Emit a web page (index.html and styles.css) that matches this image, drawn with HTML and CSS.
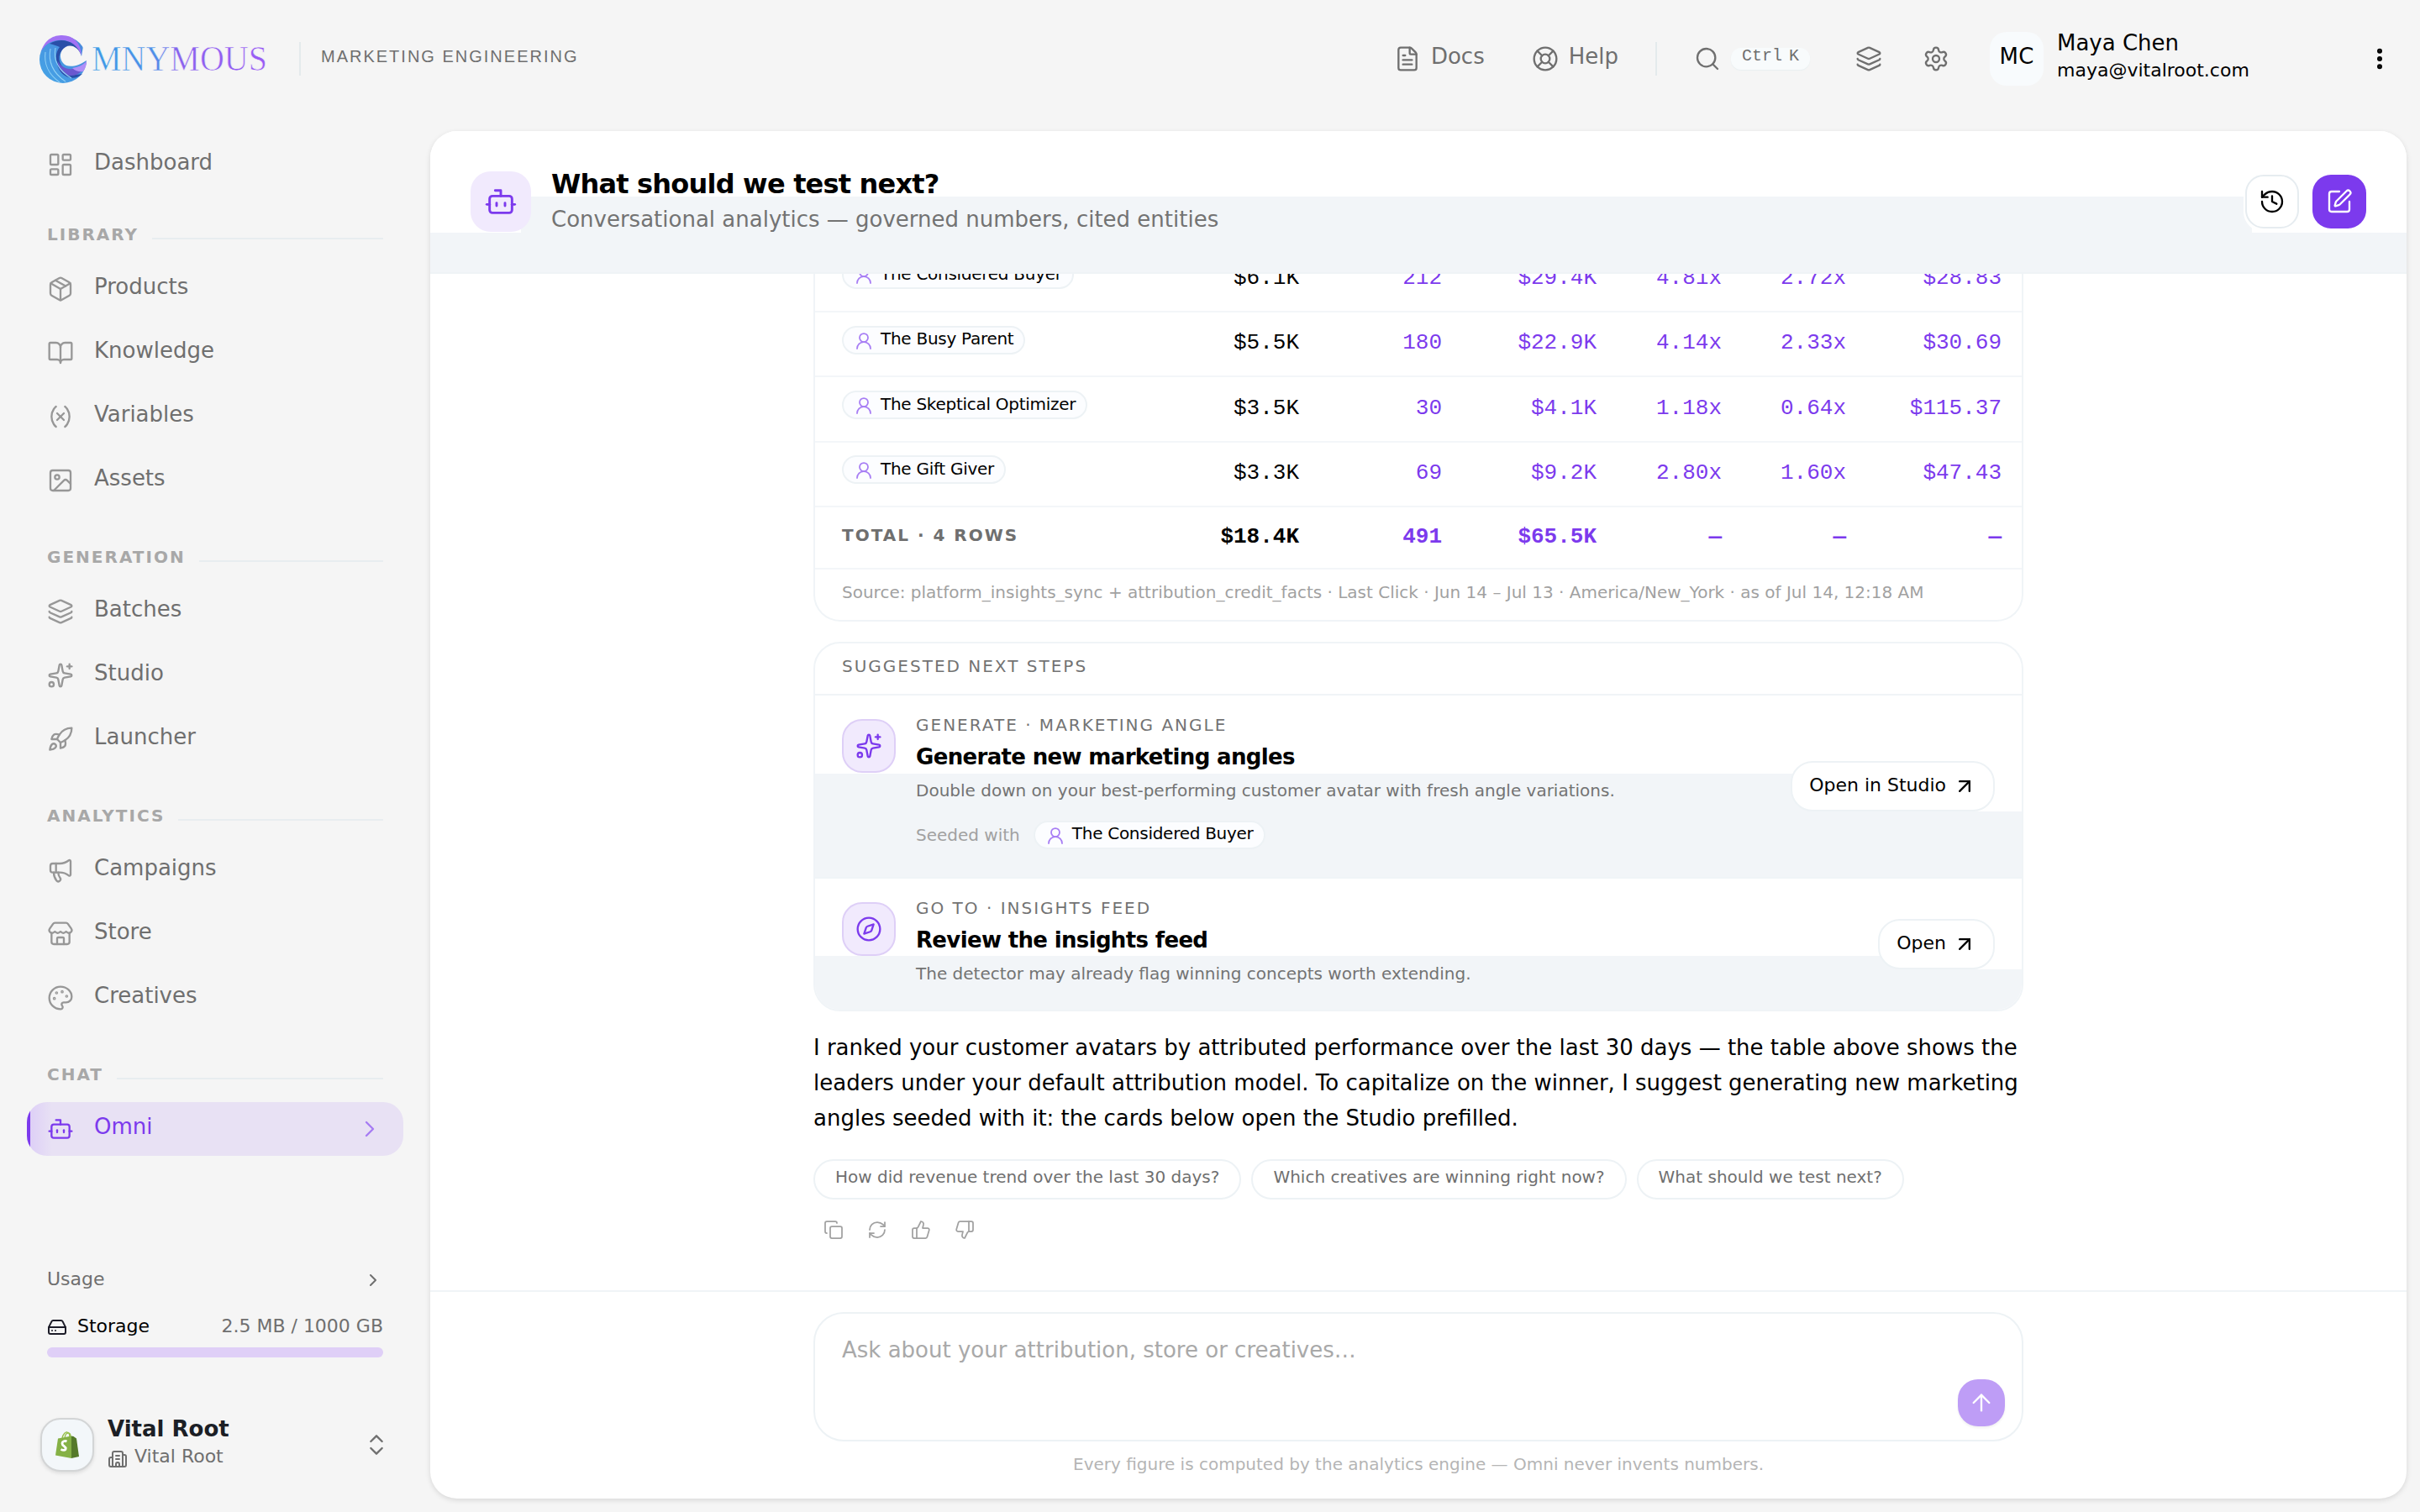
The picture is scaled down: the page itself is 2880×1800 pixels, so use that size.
FILE: index.html
```html
<!DOCTYPE html>
<html lang="en">
<head>
  <meta charset="UTF-8" />
  <meta name="viewport" content="width=device-width, initial-scale=1.0"/>
  <title>Omni - Omnymous</title>
  <link rel="stylesheet" href="styles.css">
</head>
<body>

  <!-- icon sprite -->
  <svg class="sprite" xmlns="http://www.w3.org/2000/svg">
    <symbol id="i-dashboard" viewBox="0 0 24 24"><rect width="7" height="9" x="3" y="3" rx="1"/><rect width="7" height="5" x="14" y="3" rx="1"/><rect width="7" height="9" x="14" y="12" rx="1"/><rect width="7" height="5" x="3" y="16" rx="1"/></symbol>
    <symbol id="i-package" viewBox="0 0 24 24"><path d="M11 21.73a2 2 0 0 0 2 0l7-4A2 2 0 0 0 21 16V8a2 2 0 0 0-1-1.73l-7-4a2 2 0 0 0-2 0l-7 4A2 2 0 0 0 3 8v8a2 2 0 0 0 1 1.73z"/><path d="M12 22V12"/><path d="M3.29 7 12 12l8.71-5"/><path d="m7.5 4.27 9 5.15"/></symbol>
    <symbol id="i-book" viewBox="0 0 24 24"><path d="M12 7v14"/><path d="M3 18a1 1 0 0 1-1-1V4a1 1 0 0 1 1-1h5a4 4 0 0 1 4 4 4 4 0 0 1 4-4h5a1 1 0 0 1 1 1v13a1 1 0 0 1-1 1h-6a3 3 0 0 0-3 3 3 3 0 0 0-3-3z"/></symbol>
    <symbol id="i-variable" viewBox="0 0 24 24"><path d="M8 21s-4-3-4-9 4-9 4-9"/><path d="M16 3s4 3 4 9-4 9-4 9"/><path d="m15 9-6 6"/><path d="m9 9 6 6"/></symbol>
    <symbol id="i-image" viewBox="0 0 24 24"><rect width="18" height="18" x="3" y="3" rx="2"/><circle cx="9" cy="9" r="2"/><path d="m21 15-3.086-3.086a2 2 0 0 0-2.828 0L6 21"/></symbol>
    <symbol id="i-layers" viewBox="0 0 24 24"><path d="M12.83 2.18a2 2 0 0 0-1.66 0L2.6 6.08a1 1 0 0 0 0 1.83l8.58 3.91a2 2 0 0 0 1.66 0l8.58-3.9a1 1 0 0 0 0-1.83z"/><path d="M2 12a1 1 0 0 0 .58.91l8.6 3.91a2 2 0 0 0 1.65 0l8.58-3.9A1 1 0 0 0 22 12"/><path d="M2 17a1 1 0 0 0 .58.91l8.6 3.91a2 2 0 0 0 1.65 0l8.58-3.9A1 1 0 0 0 22 17"/></symbol>
    <symbol id="i-sparkles" viewBox="0 0 24 24"><path d="M11.017 2.814a1 1 0 0 1 1.966 0l1.051 5.558a2 2 0 0 0 1.594 1.594l5.558 1.051a1 1 0 0 1 0 1.966l-5.558 1.051a2 2 0 0 0-1.594 1.594l-1.051 5.558a1 1 0 0 1-1.966 0l-1.051-5.558a2 2 0 0 0-1.594-1.594l-5.558-1.051a1 1 0 0 1 0-1.966l5.558-1.051a2 2 0 0 0 1.594-1.594z"/><path d="M20 2v4"/><path d="M22 4h-4"/><circle cx="4" cy="20" r="2"/></symbol>
    <symbol id="i-rocket" viewBox="0 0 24 24"><path d="M4.500 16.500c-1.500 1.260-2 5-2 5s3.740-.5 5-2c.71-.84.7-2.130-.09-2.910a2.180 2.180 0 0 0-2.910-.09z"/><path d="m12 15-3-3a22 22 0 0 1 2-3.950A12.880 12.880 0 0 1 22 2c0 2.720-.78 7.500-6 11a22.350 22.350 0 0 1-4 2z"/><path d="M9 12H4s.55-3.030 2-4c1.620-1.080 5 0 5 0"/><path d="M12 15v5s3.030-.55 4-2c1.080-1.620 0-5 0-5"/></symbol>
    <symbol id="i-megaphone" viewBox="0 0 24 24"><path d="M11 6a13 13 0 0 0 8.400-2.800A1 1 0 0 1 21 4v12a1 1 0 0 1-1.600.8A13 13 0 0 0 11 14H5a2 2 0 0 1-2-2V8a2 2 0 0 1 2-2z"/><path d="M6 14a12 12 0 0 0 2.400 7.200 2 2 0 0 0 3.200-2.400A8 8 0 0 1 10 14"/><path d="M8 6v8"/></symbol>
    <symbol id="i-store" viewBox="0 0 24 24"><path d="M15 21v-5a1 1 0 0 0-1-1h-4a1 1 0 0 0-1 1v5"/><path d="M17.774 10.310a1.120 1.120 0 0 0-1.549 0 2.500 2.500 0 0 1-3.451 0 1.120 1.120 0 0 0-1.548 0 2.500 2.500 0 0 1-3.452 0 1.120 1.120 0 0 0-1.549 0 2.500 2.500 0 0 1-3.770-3.248l2.889-4.184A2 2 0 0 1 7 2h10a2 2 0 0 1 1.653.873l2.895 4.192a2.500 2.500 0 0 1-3.774 3.244"/><path d="M4 10.950V19a2 2 0 0 0 2 2h12a2 2 0 0 0 2-2v-8.050"/></symbol>
    <symbol id="i-palette" viewBox="0 0 24 24"><path d="M12 22a1 1 0 0 1 0-20 10 9 0 0 1 10 9 5 5 0 0 1-5 5h-2.250a1.750 1.750 0 0 0-1.400 2.800l.3.400a1.750 1.750 0 0 1-1.400 2.800z"/><circle cx="13.500" cy="6.500" r=".5"/><circle cx="17.500" cy="10.500" r=".5"/><circle cx="6.500" cy="12.500" r=".5"/><circle cx="8.500" cy="7.500" r=".5"/></symbol>
    <symbol id="i-bot" viewBox="0 0 24 24"><path d="M12 8V4H8"/><rect width="16" height="12" x="4" y="8" rx="2"/><path d="M2 14h2"/><path d="M20 14h2"/><path d="M15 13v2"/><path d="M9 13v2"/></symbol>
    <symbol id="i-chevron" viewBox="0 0 24 24"><path d="m9 18 6-6-6-6"/></symbol>
    <symbol id="i-updown" viewBox="0 0 24 24"><path d="m7 15 5 5 5-5"/><path d="m7 9 5-5 5 5"/></symbol>
    <symbol id="i-drive" viewBox="0 0 24 24"><path d="M10 16h.01"/><path d="M2.212 11.577a2 2 0 0 0-.212.896V18a2 2 0 0 0 2 2h16a2 2 0 0 0 2-2v-5.527a2 2 0 0 0-.212-.896L18.550 5.110A2 2 0 0 0 16.760 4H7.240a2 2 0 0 0-1.790 1.110z"/><path d="M21.946 12.013H2.054"/><path d="M6 16h.01"/></symbol>
    <symbol id="i-building" viewBox="0 0 24 24"><path d="M10 12h4"/><path d="M10 8h4"/><path d="M14 21v-3a2 2 0 0 0-4 0v3"/><path d="M6 10H4a2 2 0 0 0-2 2v7a2 2 0 0 0 2 2h16a2 2 0 0 0 2-2V9a2 2 0 0 0-2-2h-2"/><path d="M6 21V5a2 2 0 0 1 2-2h8a2 2 0 0 1 2 2v16"/></symbol>
    <symbol id="i-file" viewBox="0 0 24 24"><path d="M6 22a2 2 0 0 1-2-2V4a2 2 0 0 1 2-2h8a2.400 2.400 0 0 1 1.704.706l3.588 3.588A2.400 2.400 0 0 1 20 8v12a2 2 0 0 1-2 2z"/><path d="M14 2v5a1 1 0 0 0 1 1h5"/><path d="M10 9H8"/><path d="M16 13H8"/><path d="M16 17H8"/></symbol>
    <symbol id="i-buoy" viewBox="0 0 24 24"><circle cx="12" cy="12" r="10"/><path d="m4.930 4.930 4.240 4.240"/><path d="m14.830 9.170 4.240-4.240"/><path d="m14.830 14.830 4.240 4.240"/><path d="m9.170 14.830-4.240 4.240"/><circle cx="12" cy="12" r="4"/></symbol>
    <symbol id="i-search" viewBox="0 0 24 24"><path d="m21 21-4.340-4.340"/><circle cx="11" cy="11" r="8"/></symbol>
    <symbol id="i-settings" viewBox="0 0 24 24"><path d="M9.671 4.136a2.340 2.340 0 0 1 4.659 0 2.340 2.340 0 0 0 3.319 1.915 2.340 2.340 0 0 1 2.330 4.033 2.340 2.340 0 0 0 0 3.831 2.340 2.340 0 0 1-2.330 4.033 2.340 2.340 0 0 0-3.319 1.915 2.340 2.340 0 0 1-4.659 0 2.340 2.340 0 0 0-3.320-1.915 2.340 2.340 0 0 1-2.330-4.033 2.340 2.340 0 0 0 0-3.831A2.340 2.340 0 0 1 6.350 6.051a2.340 2.340 0 0 0 3.319-1.915"/><circle cx="12" cy="12" r="3"/></symbol>
    <symbol id="i-dots" viewBox="0 0 24 24"><circle cx="12" cy="12" r="1"/><circle cx="12" cy="5" r="1"/><circle cx="12" cy="19" r="1"/></symbol>
    <symbol id="i-history" viewBox="0 0 24 24"><path d="M3 12a9 9 0 1 0 9-9 9.750 9.750 0 0 0-6.740 2.740L3 8"/><path d="M3 3v5h5"/><path d="M12 7v5l4 2"/></symbol>
    <symbol id="i-pen" viewBox="0 0 24 24"><path d="M12 3H5a2 2 0 0 0-2 2v14a2 2 0 0 0 2 2h14a2 2 0 0 0 2-2v-7"/><path d="M18.375 2.625a1 1 0 0 1 3 3l-9.013 9.014a2 2 0 0 1-.853.505l-2.873.84a.5.5 0 0 1-.62-.62l.84-2.873a2 2 0 0 1 .506-.852z"/></symbol>
    <symbol id="i-user" viewBox="0 0 24 24"><circle cx="12" cy="8" r="5"/><path d="M20 21a8 8 0 0 0-16 0"/></symbol>
    <symbol id="i-compass" viewBox="0 0 24 24"><circle cx="12" cy="12" r="10"/><path d="m16.240 7.760-1.804 5.411a2 2 0 0 1-1.265 1.265L7.760 16.240l1.804-5.411a2 2 0 0 1 1.265-1.265z"/></symbol>
    <symbol id="i-arrow-ur" viewBox="0 0 24 24"><path d="M7 7h10v10"/><path d="M7 17 17 7"/></symbol>
    <symbol id="i-arrow-up" viewBox="0 0 24 24"><path d="m5 12 7-7 7 7"/><path d="M12 19V5"/></symbol>
    <symbol id="i-copy" viewBox="0 0 24 24"><rect width="14" height="14" x="8" y="8" rx="2"/><path d="M4 16c-1.100 0-2-.9-2-2V4c0-1.100.9-2 2-2h10c1.100 0 2 .9 2 2"/></symbol>
    <symbol id="i-refresh" viewBox="0 0 24 24"><path d="M3 12a9 9 0 0 1 9-9 9.750 9.750 0 0 1 6.740 2.740L21 8"/><path d="M21 3v5h-5"/><path d="M21 12a9 9 0 0 1-9 9 9.750 9.750 0 0 1-6.740-2.740L3 16"/><path d="M8 16H3v5"/></symbol>
    <symbol id="i-up" viewBox="0 0 24 24"><path d="M7 10v12"/><path d="M15 5.880 14 10h5.830a2 2 0 0 1 1.920 2.560l-2.330 8A2 2 0 0 1 17.500 22H4a2 2 0 0 1-2-2v-8a2 2 0 0 1 2-2h2.760a2 2 0 0 0 1.790-1.110L12 2a3.130 3.130 0 0 1 3 3.880Z"/></symbol>
    <symbol id="i-down" viewBox="0 0 24 24"><path d="M17 14V2"/><path d="M9 18.120 10 14H4.170a2 2 0 0 1-1.920-2.560l2.330-8A2 2 0 0 1 6.500 2H20a2 2 0 0 1 2 2v8a2 2 0 0 1-2 2h-2.760a2 2 0 0 0-1.790 1.110L12 22a3.130 3.130 0 0 1-3-3.880Z"/></symbol>
  </svg>

  <header class="topbar">
    <svg class="logo" viewBox="0 0 280 60">
      <defs>
        <linearGradient id="word" x1="62" x2="270" y1="0" y2="0" gradientUnits="userSpaceOnUse">
          <stop offset="0" stop-color="#3b9be6"/><stop offset=".36" stop-color="#4f8fe8"/><stop offset=".5" stop-color="#8a62ee"/><stop offset="1" stop-color="#9a5cf5"/>
        </linearGradient>
        <linearGradient id="swirl" x1="0" x2="1" y1="1" y2="0">
          <stop offset="0" stop-color="#45a5e6"/><stop offset="1" stop-color="#4a86dc"/>
        </linearGradient>
      </defs>
      <circle cx="28" cy="31" r="28" fill="url(#swirl)"/>
      <path d="M2 21C7 6 17 2 27 2c13 0 22 8 23 24C44 12 33 6 22 8 12 9 6 14 2 21z" fill="#a272f4"/>
      <path d="M12 12C26 4 44 8 50 27c-6-11-15-13-22-8-7 6-6 17 3 24 6 5 12 7 20 5-8 8-22 6-28-6-5-10-4-20 1-26-4-2-8-3-12-4z" fill="#2a4fa8"/>
      <path d="M56 34c-2 9-10 17-20 16-9-1-14-9-14-17 3 6 10 10 18 9 6-1 12-3 16-8z" fill="#6a58cf"/>
      <path d="M56 33c-5 5-10 7-17 8 4 4 9 5 13 4 3-4 4-8 4-12z" fill="#b08ff7"/>
      <path d="M7 22c-2 14 4 27 17 36M13 18c-3 16 3 29 18 39M19 17c-3 15 4 27 19 36" fill="none" stroke="#8fd0f5" stroke-width="1.1"/>
      <path d="M50 27C47 17 38 12 31 16c-7 4-8 13-3 19 5 6 16 5 28-3l4-8-8-9z" fill="#f5f5f5"/>
      <text x="62" y="44" textLength="209" lengthAdjust="spacingAndGlyphs" fill="url(#word)">MNYMOUS</text>
    </svg>
    <span class="divider"></span>
    <span class="tagline">MARKETING ENGINEERING</span>

    <div class="top-right">
      <a class="top-link docs"><svg class="icon"><use href="#i-file"/></svg><span>Docs</span></a>
      <a class="top-link"><svg class="icon"><use href="#i-buoy"/></svg><span>Help</span></a>
      <span class="divider mid"></span>
      <svg class="icon"><use href="#i-search"/></svg>
      <kbd class="kbd"><span>Ctrl</span><span>K</span></kbd>
      <svg class="icon icon-layers"><use href="#i-layers"/></svg>
      <svg class="icon icon-gear"><use href="#i-settings"/></svg>
      <div class="account">
        <div class="avatar">MC</div>
        <div class="account-text">
          <div class="account-name">Maya Chen</div>
          <div class="account-mail">maya@vitalroot.com</div>
        </div>
        <svg class="icon dots"><use href="#i-dots"/></svg>
      </div>
    </div>
  </header>

  <div class="layout">
    <aside class="sidebar">
      <nav class="nav">
        <a class="nav-item"><svg class="icon"><use href="#i-dashboard"/></svg><span>Dashboard</span></a>
        <div class="nav-label first"><span>LIBRARY</span></div>
        <div class="nav-group">
          <a class="nav-item"><svg class="icon"><use href="#i-package"/></svg><span>Products</span></a>
          <a class="nav-item"><svg class="icon"><use href="#i-book"/></svg><span>Knowledge</span></a>
          <a class="nav-item"><svg class="icon"><use href="#i-variable"/></svg><span>Variables</span></a>
          <a class="nav-item"><svg class="icon"><use href="#i-image"/></svg><span>Assets</span></a>
        </div>
        <div class="nav-label"><span>GENERATION</span></div>
        <div class="nav-group">
          <a class="nav-item"><svg class="icon"><use href="#i-layers"/></svg><span>Batches</span></a>
          <a class="nav-item"><svg class="icon"><use href="#i-sparkles"/></svg><span>Studio</span></a>
          <a class="nav-item"><svg class="icon"><use href="#i-rocket"/></svg><span>Launcher</span></a>
        </div>
        <div class="nav-label"><span>ANALYTICS</span></div>
        <div class="nav-group">
          <a class="nav-item"><svg class="icon"><use href="#i-megaphone"/></svg><span>Campaigns</span></a>
          <a class="nav-item"><svg class="icon"><use href="#i-store"/></svg><span>Store</span></a>
          <a class="nav-item"><svg class="icon"><use href="#i-palette"/></svg><span>Creatives</span></a>
        </div>
        <div class="nav-label"><span>CHAT</span></div>
        <a class="nav-item active"><svg class="icon"><use href="#i-bot"/></svg><span>Omni</span><svg class="icon nav-arrow"><use href="#i-chevron"/></svg></a>
      </nav>

      <div class="usage">
        <div class="usage-head"><span>Usage</span><svg class="icon small"><use href="#i-chevron"/></svg></div>
        <div class="usage-row">
          <svg class="icon small"><use href="#i-drive"/></svg>
          <span class="usage-name">Storage</span>
          <span class="usage-value">2.5 MB / 1000 GB</span>
        </div>
        <div class="usage-bar"></div>
      </div>

      <div class="workspace">
        <div class="workspace-logo">
          <svg viewBox="0 0 28 32">
            <path d="M8 8c1-5 4-7.500 6-7 2 .4 3 3 3 6M11 8c.5-4 2-6 4-6 2 0 3 2 3 4" fill="none" stroke="#95bf47" stroke-width="1.300"/>
            <path d="M3 8.500 19 5.500V32L0 28.500z" fill="#85b146"/>
            <path d="M19 5.500 21.500 6l3.500 2.500L28 30l-9 2z" fill="#55792a"/>
            <path d="M13.500 12c-2-1-5.500-.5-5.500 2.500 0 3 4.500 3.500 4.200 6-.3 2.500-3.400 2.300-5.700.8" fill="none" stroke="#fff" stroke-width="2.800"/>
          </svg>
        </div>
        <div class="workspace-text">
          <div class="workspace-name">Vital Root</div>
          <div class="workspace-org"><svg class="icon small"><use href="#i-building"/></svg><span>Vital Root</span></div>
        </div>
        <svg class="icon"><use href="#i-updown"/></svg>
      </div>
    </aside>

    <main class="panel">
      <header class="chat-header">
        <div class="chat-badge"><svg class="icon"><use href="#i-bot"/></svg></div>
        <div class="chat-title">
          <h1>What should we test next?</h1>
          <p>Conversational analytics — governed numbers, cited entities</p>
        </div>
        <button class="icon-btn"><svg class="icon"><use href="#i-history"/></svg></button>
        <button class="icon-btn primary"><svg class="icon"><use href="#i-pen"/></svg></button>
      </header>

      <div class="chat-scroll">
        <div class="column">
          <section class="report">
            <div class="row">
              <div><span class="chip"><svg class="icon"><use href="#i-user"/></svg><span>The Considered Buyer</span></span></div>
              <b>$6.1K</b><b>212</b><b>$29.4K</b><b>4.81x</b><b>2.72x</b><b>$28.83</b>
            </div>
            <div class="row">
              <div><span class="chip"><svg class="icon"><use href="#i-user"/></svg><span>The Busy Parent</span></span></div>
              <b>$5.5K</b><b>180</b><b>$22.9K</b><b>4.14x</b><b>2.33x</b><b>$30.69</b>
            </div>
            <div class="row">
              <div><span class="chip"><svg class="icon"><use href="#i-user"/></svg><span>The Skeptical Optimizer</span></span></div>
              <b>$3.5K</b><b>30</b><b>$4.1K</b><b>1.18x</b><b>0.64x</b><b>$115.37</b>
            </div>
            <div class="row">
              <div><span class="chip"><svg class="icon"><use href="#i-user"/></svg><span>The Gift Giver</span></span></div>
              <b>$3.3K</b><b>69</b><b>$9.2K</b><b>2.80x</b><b>1.60x</b><b>$47.43</b>
            </div>
            <div class="row total">
              <div>TOTAL · 4 ROWS</div>
              <b>$18.4K</b><b>491</b><b>$65.5K</b><b>—</b><b>—</b><b>—</b>
            </div>
            <p class="source">Source: platform_insights_sync + attribution_credit_facts · Last Click · Jun 14 – Jul 13 · America/New_York · as of Jul 14, 12:18 AM</p>
          </section>

          <section class="steps">
            <div class="steps-head">SUGGESTED NEXT STEPS</div>
            <article class="step step-generate">
              <div class="step-icon"><svg class="icon"><use href="#i-sparkles"/></svg></div>
              <div class="step-body">
                <div class="eyebrow">GENERATE · MARKETING ANGLE</div>
                <h2>Generate new marketing angles</h2>
                <p>Double down on your best-performing customer avatar with fresh angle variations.</p>
                <div class="seeded"><span>Seeded with</span><span class="chip"><svg class="icon"><use href="#i-user"/></svg><span>The Considered Buyer</span></span></div>
              </div>
              <button class="open-btn"><span>Open in Studio</span><svg class="icon"><use href="#i-arrow-ur"/></svg></button>
            </article>
            <article class="step step-review">
              <div class="step-icon"><svg class="icon"><use href="#i-compass"/></svg></div>
              <div class="step-body">
                <div class="eyebrow">GO TO · INSIGHTS FEED</div>
                <h2>Review the insights feed</h2>
                <p>The detector may already flag winning concepts worth extending.</p>
              </div>
              <button class="open-btn"><span>Open</span><svg class="icon"><use href="#i-arrow-ur"/></svg></button>
            </article>
          </section>

          <p class="answer">I ranked your customer avatars by attributed performance over the last 30 days — the table above shows the leaders under your default attribution model. To capitalize on the winner, I suggest generating new marketing angles seeded with it: the cards below open the Studio prefilled.</p>

          <div class="followups">
            <button>How did revenue trend over the last 30 days?</button>
            <button>Which creatives are winning right now?</button>
            <button>What should we test next?</button>
          </div>

          <div class="actions">
            <svg class="icon"><use href="#i-copy"/></svg>
            <svg class="icon"><use href="#i-refresh"/></svg>
            <svg class="icon"><use href="#i-up"/></svg>
            <svg class="icon"><use href="#i-down"/></svg>
          </div>
        </div>
      </div>

      <footer class="chat-footer">
        <div class="composer">
          <textarea placeholder="Ask about your attribution, store or creatives…"></textarea>
          <button class="send"><svg class="icon"><use href="#i-arrow-up"/></svg></button>
        </div>
        <p class="footnote">Every figure is computed by the analytics engine — Omni never invents numbers.</p>
      </footer>
    </main>
  </div>

</body>
</html>
```
FILE: styles.css
```css
* {
  box-sizing: border-box;
}

body {
  margin: 0;
  height: 1800px;
  display: flex;
  flex-direction: column;
  overflow: hidden;
  background: #f5f5f5;
  color: #000;
  font-family: "DejaVu Sans", sans-serif;
  font-size: 26px;
}

h1, h2, p {
  margin: 0;
}

button {
  font-family: inherit;
  color: inherit;
  margin: 0;
  padding: 0;
}

.sprite {
  display: none;
}

.icon {
  width: 32px;
  height: 32px;
  flex: none;
  fill: none;
  stroke: currentColor;
  stroke-width: 1.75;
  stroke-linecap: round;
  stroke-linejoin: round;
}

.icon.small {
  width: 24px;
  height: 24px;
  stroke-width: 2;
}

/* top bar */
.topbar {
  height: 140px;
  flex: none;
  display: flex;
  align-items: center;
  padding: 0 32px 0 47px;
  color: #6f6f6f;
}

.logo {
  width: 280px;
  height: 60px;
  flex: none;
  overflow: visible;
}

.logo text {
  font-family: "Liberation Serif", serif;
  font-size: 43px;
  stroke: #f5f5f5;
  stroke-width: 0.7px;
}

.divider {
  width: 2px;
  height: 40px;
  background: #e4eaec;
  margin-left: 29px;
}

.tagline {
  margin-left: 24px;
  padding-bottom: 6px;
  font-family: "Liberation Sans", sans-serif;
  font-size: 20px;
  letter-spacing: 2px;
}

.top-right {
  margin-left: auto;
  display: flex;
  align-items: center;
}

.top-link {
  display: flex;
  align-items: center;
  gap: 12px;
}

.top-link span {
  padding-bottom: 6px;
}

.docs {
  margin-right: 56px;
}

.divider.mid {
  margin: 0 44px;
}

.kbd {
  width: 94px;
  height: 26px;
  margin-left: 12px;
  padding-left: 13px;
  display: flex;
  gap: 8px;
  border-radius: 12px;
  background: #f8fbfc;
  box-shadow: 0 1px 1px #e8eff1;
  font-family: "Liberation Mono", monospace;
  font-size: 20px;
  line-height: 20px;
}

.icon-layers {
  margin-left: 54px;
}

.icon-gear {
  margin: 0 48px;
}

.account {
  width: 480px;
  display: flex;
  align-items: center;
  color: #000;
}

.avatar {
  width: 64px;
  height: 64px;
  border-radius: 20px;
  background: #f8fbfd;
  text-align: center;
  line-height: 58px;
  letter-spacing: 0.3px;
}

.account-text {
  margin-left: 16px;
  padding-bottom: 5px;
  line-height: 32px;
}

.account-mail {
  padding-top: 1px;
  font-size: 22px;
}

.dots {
  margin-left: auto;
  stroke-width: 2.5;
}

/* layout */
.layout {
  flex: 1;
  min-height: 0;
  display: flex;
}

.sidebar {
  width: 512px;
  flex: none;
  display: flex;
  flex-direction: column;
  padding: 24px 32px 48px;
  color: #6f6f6f;
}

.nav-group {
  display: flex;
  flex-direction: column;
  gap: 12px;
}

.nav-item {
  display: flex;
  align-items: center;
  height: 64px;
  padding: 0 24px;
  gap: 24px;
  border-radius: 24px;
}

.nav-item span {
  padding-bottom: 6px;
}

.nav-item .icon {
  color: #979797;
}

.nav-item.active {
  position: relative;
  overflow: hidden;
  color: #7c3aed;
  background: linear-gradient(90deg, #dccdf7, #e8e1f4 30px);
}

.nav-item.active::before {
  content: "";
  position: absolute;
  left: 0;
  top: 0;
  width: 4px;
  height: 64px;
  background: #7c3aed;
}

.nav-item.active .icon {
  color: #7c3aed;
}

.nav-item.active .nav-arrow {
  margin-left: auto;
  color: #a67bf3;
}

.nav-label {
  height: 92px;
  padding: 52px 24px 16px;
  display: flex;
  align-items: center;
  gap: 16px;
  font-size: 20px;
  font-weight: bold;
  letter-spacing: 2px;
  color: #a8a8a8;
}

.nav-label.first {
  height: 84px;
  padding-top: 44px;
}

.nav-label span {
  padding-bottom: 10px;
}

.nav-label::after {
  content: "";
  flex: 1;
  height: 2px;
  background: #e8edf0;
}

.usage {
  margin-top: auto;
  padding: 0 24px;
  font-size: 22px;
}

.usage-head {
  display: flex;
  justify-content: space-between;
  align-items: center;
  height: 32px;
}

.usage-head span,
.usage-row span {
  padding-bottom: 4px;
}

.usage-row {
  display: flex;
  align-items: center;
  height: 32px;
  margin-top: 24px;
  color: #1c1c28;
}

.usage-name {
  margin-left: 12px;
  color: #000;
}

.usage-value {
  margin-left: auto;
  color: #6f6f6f;
}

.usage-bar {
  height: 12px;
  margin-top: 8px;
  border-radius: 6px;
  background: #dfcff7;
}

.workspace {
  display: flex;
  align-items: center;
  height: 64px;
  margin-top: 72px;
  padding: 0 16px;
}

.workspace-logo {
  width: 64px;
  height: 64px;
  display: flex;
  align-items: center;
  justify-content: center;
  border: 2px solid #d3d5d6;
  border-radius: 24px;
  background: #f3f7fa;
  box-shadow: 0 2px 4px rgba(0, 0, 0, 0.1);
}

.workspace-logo svg {
  width: 28px;
  height: 32px;
}

.workspace-text {
  flex: 1;
  margin-left: 16px;
  padding-bottom: 4px;
}

.workspace-name {
  font-weight: bold;
  line-height: 29px;
  padding-bottom: 3px;
  color: #1c1f26;
}

.workspace-org {
  display: flex;
  align-items: center;
  gap: 8px;
  font-size: 22px;
  line-height: 28px;
}

.workspace-org .icon {
  margin-top: 6px;
}

/* chat panel */
.panel {
  flex: 1;
  min-width: 0;
  display: flex;
  flex-direction: column;
  margin: 16px 16px 16px 0;
  border-radius: 32px;
  overflow: hidden;
  background: #fff;
  box-shadow: 0 2px 6px rgba(0, 0, 0, 0.12);
}

/* stepped tint behind the header row */
.chat-header {
  height: 170px;
  flex: none;
  display: flex;
  align-items: center;
  padding: 0 48px;
  border-bottom: 2px solid #eff3f6;
  background:
    linear-gradient(#f2f5f8, #f2f5f8) 0 121px / 100% 47px no-repeat,
    linear-gradient(#f2f5f8, #f2f5f8) 108px 78px / 2060px 90px no-repeat,
    #fff;
}

.chat-badge {
  width: 72px;
  height: 72px;
  display: flex;
  align-items: center;
  justify-content: center;
  border-radius: 24px;
  background: #f1eafd;
  color: #7c3aed;
}

.chat-badge .icon {
  width: 40px;
  height: 40px;
}

.chat-title {
  flex: 1;
  margin-left: 24px;
  padding-bottom: 4px;
}

.chat-title h1 {
  font-size: 32px;
  line-height: 40px;
  letter-spacing: -0.8px;
}

.chat-title p {
  margin-top: 6px;
  line-height: 32px;
  color: #737373;
}

.icon-btn {
  width: 64px;
  height: 64px;
  display: flex;
  align-items: center;
  justify-content: center;
  border: 2px solid #e6ecf0;
  border-radius: 22px;
  background: #fff;
  box-shadow: 0 2px 0 2px #fff;
}

.icon-btn.primary {
  margin-left: 16px;
  border: 0;
  background: #7c3aed;
  color: #fff;
}

.chat-scroll {
  flex: 1;
  min-height: 0;
  overflow: hidden;
  display: flex;
  flex-direction: column;
  justify-content: flex-end;
  align-items: center;
  padding-bottom: 48px;
}

.column {
  width: 1440px;
}

.report {
  border: 2px solid #f0f4f7;
  border-top: 0;
  border-radius: 0 0 32px 32px;
}

.row {
  display: grid;
  grid-template-columns: 424px 176px 170px 184px 149px 148px 185px;
  align-items: center;
  height: 77.33px;
  border-bottom: 2px solid #f3f6f9;
}

.row div {
  display: flex;
  padding: 0 0 10px 32px;
}

.row b {
  padding: 0 24px 3px 0;
  text-align: right;
  font-family: "Liberation Mono", monospace;
  font-weight: normal;
  color: #7c3aed;
}

.row div + b {
  color: #000;
}

.row.total {
  height: 74px;
}

.row.total div {
  padding-bottom: 6px;
  font-size: 20px;
  font-weight: bold;
  letter-spacing: 2px;
  color: #6f6f6f;
}

.row.total b {
  padding-bottom: 2px;
  font-weight: bold;
}

.chip {
  display: inline-flex;
  align-items: center;
  gap: 8px;
  height: 34px;
  padding: 0 12px;
  border: 2px solid #edf2f5;
  border-radius: 17px;
  background: #fcfdff;
  font-size: 20px;
  line-height: 24px;
  letter-spacing: -0.28px;
  color: #000;
}

.chip span {
  padding-bottom: 3px;
}

.chip .icon {
  width: 24px;
  height: 24px;
  margin-top: 2px;
  color: #a77df4;
}

.source {
  height: 60px;
  padding-left: 32px;
  font-size: 20px;
  line-height: 54px;
  color: #a1a1a1;
}

.steps {
  margin-top: 24px;
  border: 2px solid #f0f4f7;
  border-radius: 32px;
  overflow: hidden;
}

.steps-head {
  height: 62px;
  padding-left: 32px;
  border-bottom: 2px solid #f0f4f7;
  font-size: 20px;
  line-height: 54px;
  letter-spacing: 2px;
  color: #737373;
}

.step {
  display: flex;
  align-items: flex-start;
  padding: 28px 32px;
}

.step-generate {
  height: 218px;
  border-bottom: 2px solid #f0f4f7;
  background:
    linear-gradient(#f2f5f8, #f2f5f8) 0 93px / 1190px 123px no-repeat,
    linear-gradient(#f2f5f8, #f2f5f8) 0 138px / 100% 78px no-repeat;
}

.step-review {
  height: 156px;
  background:
    linear-gradient(#f2f5f8, #f2f5f8) 0 92px / 1290px 64px no-repeat,
    linear-gradient(#f2f5f8, #f2f5f8) 0 108px / 100% 48px no-repeat;
}

.step-icon {
  width: 64px;
  height: 64px;
  flex: none;
  display: flex;
  align-items: center;
  justify-content: center;
  border: 2px solid #decff7;
  border-radius: 24px;
  background: #f1eafd;
  color: #7c3aed;
}

.step-body {
  flex: 1;
  margin-left: 24px;
}

.eyebrow {
  font-size: 20px;
  line-height: 14px;
  letter-spacing: 2px;
  color: #737373;
}

.step-body h2 {
  margin-top: 18px;
  font-size: 26px;
  line-height: 26px;
  letter-spacing: -0.65px;
}

.step-body p {
  margin-top: 15px;
  font-size: 20px;
  line-height: 24px;
  color: #737373;
}

.seeded {
  display: flex;
  align-items: center;
  gap: 16px;
  margin-top: 24px;
  font-size: 20px;
  color: #a1a1a1;
}

.seeded .chip span {
  padding-bottom: 5px;
}

.open-btn {
  align-self: center;
  height: 60px;
  display: flex;
  align-items: center;
  gap: 8px;
  padding: 0 20px;
  border: 2px solid #edf2f5;
  border-radius: 26px;
  background: #fff;
  font-size: 22px;
}

.open-btn span {
  padding-bottom: 3px;
}

.open-btn .icon {
  width: 28px;
  height: 28px;
  stroke-width: 2;
  stroke-linejoin: miter;
}

.answer {
  margin-top: 22px;
  line-height: 42px;
}

.followups {
  display: flex;
  gap: 12px;
  margin-top: 28px;
}

.followups button {
  height: 48px;
  padding: 0 24px 7px;
  border: 2px solid #edf2f5;
  border-radius: 24px;
  background: #fff;
  font-size: 20px;
  color: #6f6f6f;
}

.actions {
  display: flex;
  gap: 28px;
  height: 48px;
  margin-top: 12px;
  padding: 12px;
  color: #a1a1a1;
}

.actions .icon {
  width: 24px;
  height: 24px;
}

.chat-footer {
  height: 248px;
  flex: none;
  padding: 24px 456px 0;
  border-top: 2px solid #f0f4f7;
}

.composer {
  height: 154px;
  display: flex;
  flex-direction: column;
  justify-content: space-between;
  padding: 22px 20px 16px 32px;
  border: 2px solid #edf2f5;
  border-radius: 36px;
}

.composer textarea {
  display: block;
  width: 100%;
  height: 42px;
  padding: 0;
  border: 0;
  outline: none;
  resize: none;
  overflow: hidden;
  background: none;
  font-family: inherit;
  font-size: 26px;
  line-height: 42px;
}

.composer textarea::placeholder {
  color: #a9a9a9;
  opacity: 1;
}

.send {
  width: 56px;
  height: 56px;
  align-self: flex-end;
  display: flex;
  align-items: center;
  justify-content: center;
  border: 0;
  border-radius: 24px;
  background: #be9df6;
  color: #fff;
  box-shadow: 0 2px 3px rgba(0, 0, 0, 0.06);
}

.footnote {
  margin-top: 15px;
  font-size: 20px;
  line-height: 24px;
  text-align: center;
  color: #b5b5b5;
}
```
